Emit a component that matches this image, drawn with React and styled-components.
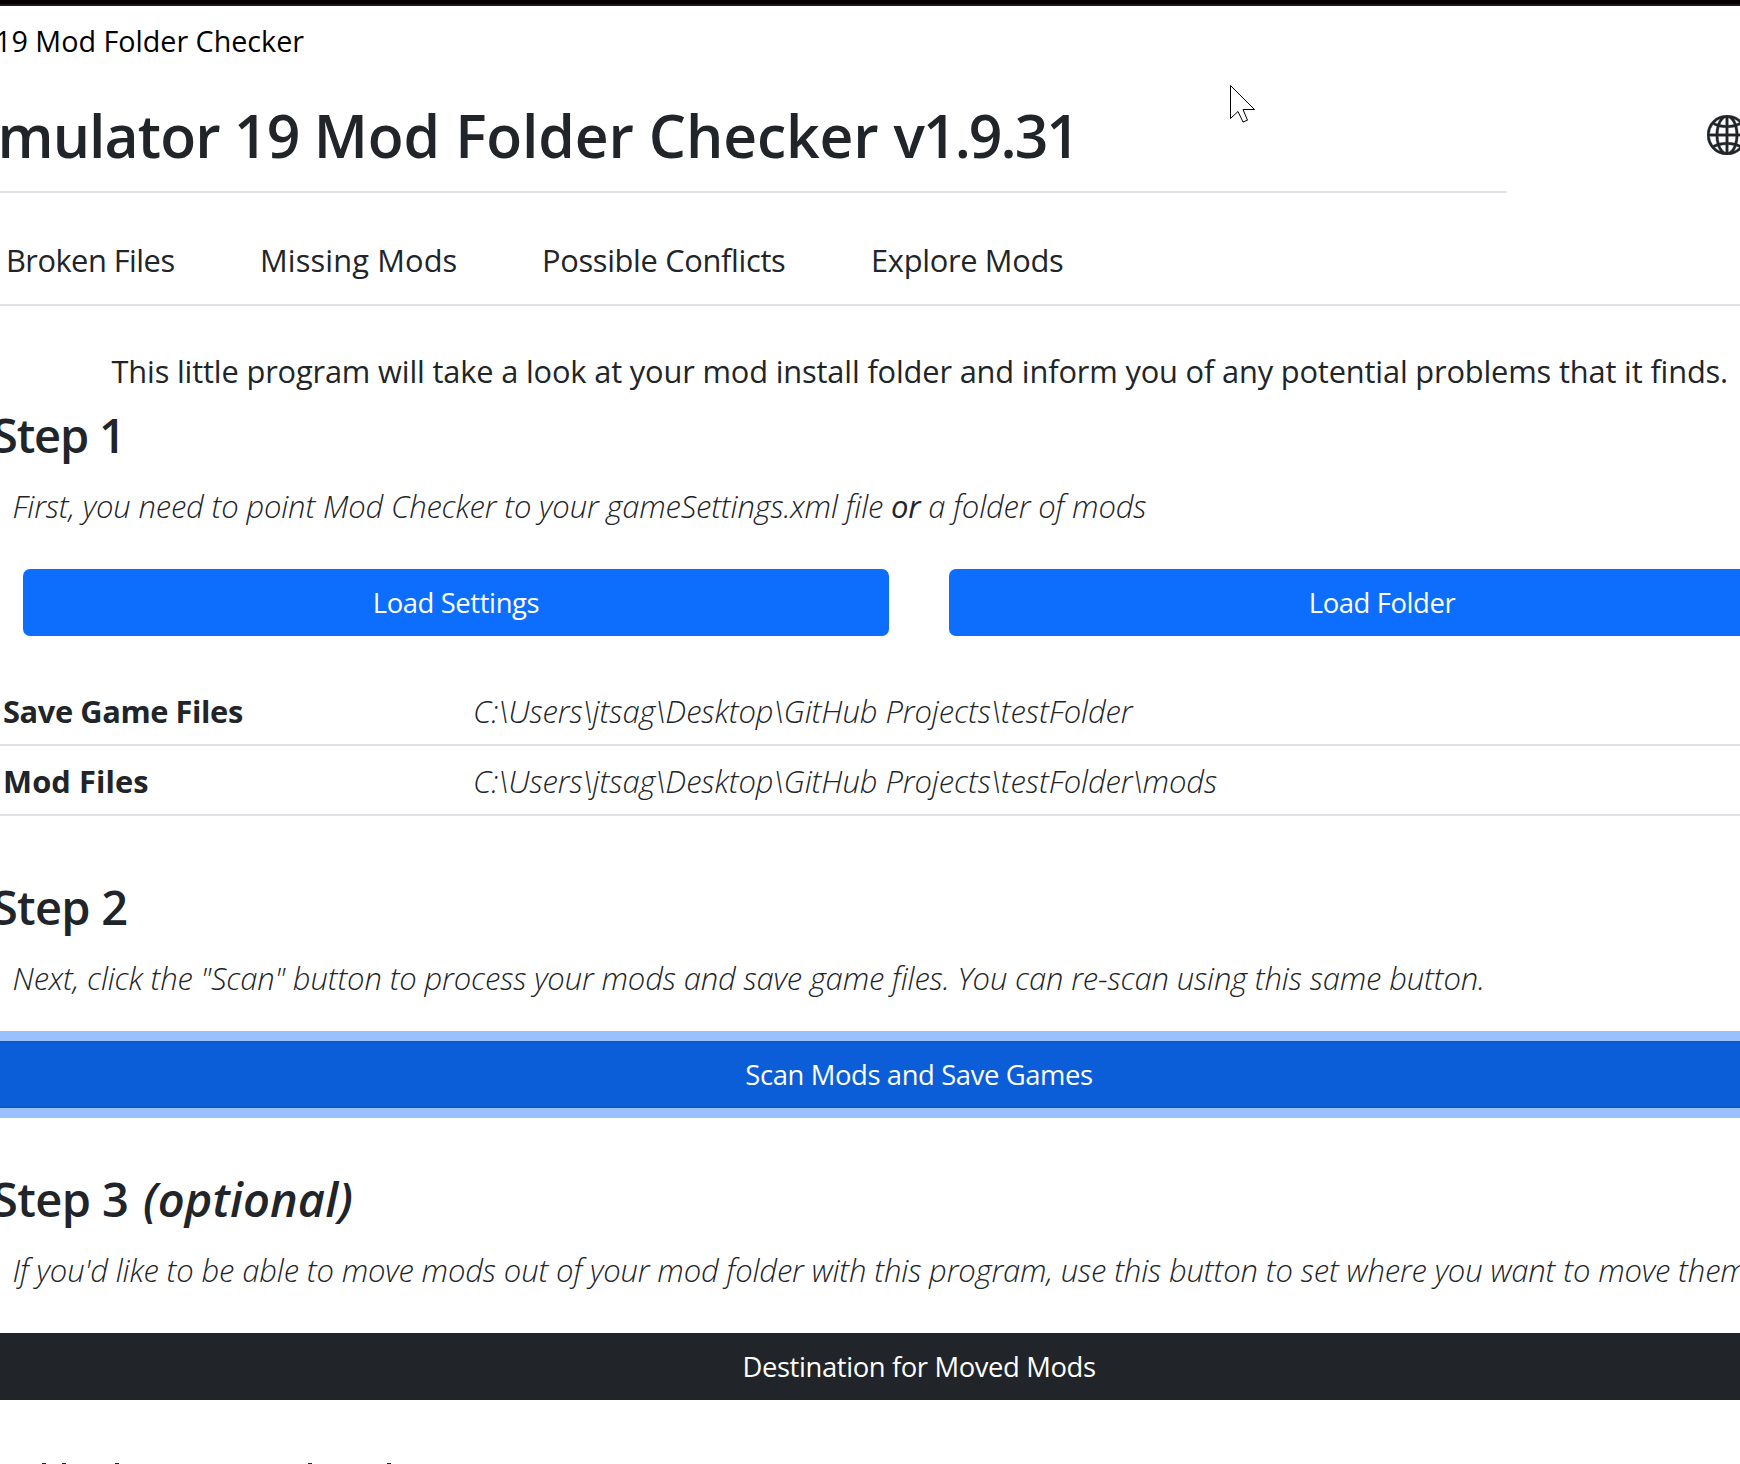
import React from "react";
import styled, { createGlobalStyle } from "styled-components";
import { BsGlobe2 } from "react-icons/bs";

const GlobalStyle = createGlobalStyle`
  * { box-sizing: border-box; }
  html, body { margin: 0; padding: 0; overflow: hidden; background: #fff; }
  body { font-family: "Open Sans", "Noto Sans", sans-serif; color: #212529; }
`;

const Window = styled.div`
  position: relative;
  display: flex;
  flex-direction: column;
  width: 1740px;
  height: 1464px;
  overflow: hidden;
  background: #fff;
  white-space: nowrap;
`;

const WindowEdge = styled.div`
  flex: none;
  height: 6px;
  background: #060001;
  border-bottom: 2px solid #1d1a1b;
`;

const TitleBar = styled.div`
  flex: none;
  height: 70px;
  display: flex;
  justify-content: flex-end;
  align-items: center;
  width: 304px;
  color: #000;
  font-size: 28.7px;
  line-height: 40px;
`;

const Header = styled.header`
  flex: none;
  display: flex;
  height: 117px;
`;

const HeaderTitle = styled.h1`
  flex: none;
  margin: 0;
  width: 1507px;
  height: 117px;
  padding: 23px 429px 0 0;
  display: flex;
  justify-content: flex-end;
  border-bottom: 2px solid #dee2e6;
  font-size: 58.8px;
  font-weight: 600;
  line-height: 72px;
  white-space: pre;
`;

const TitlePart = styled.span`
  letter-spacing: ${(p) => p.$tracking}px;
`;

const LanguageButton = styled.button`
  flex: none;
  margin: 39px 0 0 200px;
  padding: 0;
  width: 40px;
  height: 40px;
  border: 0;
  background: none;
  color: #212529;
  svg {
    display: block;
    width: 40px;
    height: 40px;
    stroke: currentColor;
    stroke-width: 0.15px;
  }
`;

const Tabs = styled.nav`
  flex: none;
  display: grid;
  grid-template-columns: 254px 282px 329px auto;
  height: 113px;
  padding: 43px 0 0 6px;
  border-bottom: 2px solid #dee2e6;
`;

const Tab = styled.a`
  font-size: 30.8px;
  line-height: 48px;
  letter-spacing: ${(p) => p.$tracking}px;
`;

const Intro = styled.p`
  flex: none;
  margin: 42px 0 0 111.5px;
  font-size: 30.8px;
  line-height: 46px;
  letter-spacing: -0.16px;
`;

const Step = styled.section`
  flex: none;
  display: flex;
  flex-direction: column;
  margin-top: ${(p) => p.$top}px;
`;

const StepTitle = styled.h2`
  margin: 1px 0 19px -8px;
  font-size: 47px;
  font-weight: 600;
  line-height: 58px;
  letter-spacing: ${(p) => p.$tracking}px;
`;

const Optional = styled.em`
  margin-left: 3px;
  letter-spacing: 0.1px;
`;

const Hint = styled.p`
  margin: 0 0 40px 12.5px;
  font-size: 31px;
  font-weight: 300;
  font-style: italic;
  line-height: 46px;
  letter-spacing: ${(p) => p.$tracking}px;
  b { font-weight: 500; }
`;

const ButtonRow = styled.div`
  display: grid;
  grid-template-columns: 866px 866px;
  column-gap: 60px;
  padding-left: 23px;
`;

const Button = styled.button`
  height: 67px;
  padding: 1px 0 0;
  border: 2px solid ${(p) => p.$border};
  border-radius: 7px;
  background: ${(p) => p.$fill};
  box-shadow: ${(p) => (p.$focused ? "0 0 0 10px #98c1fe" : "none")};
  color: #fff;
  font-family: inherit;
  font-size: 27.4px;
  line-height: 42px;
  letter-spacing: -0.38px;
`;

const WideButton = styled(Button)`
  width: 1880px;
  margin-left: -21px;
`;

const Paths = styled.dl`
  margin: 40px 0 0;
`;

const PathRow = styled.div`
  display: grid;
  grid-template-columns: 470px auto;
  align-items: center;
  height: 70px;
  padding: 1px 0 0 3px;
  border-bottom: 2px solid #dee2e6;
`;

const PathLabel = styled.dt`
  font-size: 30.8px;
  font-weight: 700;
  line-height: 46px;
  letter-spacing: ${(p) => p.$tracking}px;
`;

const PathValue = styled.dd`
  margin: 0;
  font-size: 31px;
  font-weight: 300;
  font-style: italic;
  line-height: 46px;
  letter-spacing: -0.08px;
`;

const NextHeading = styled.svg`
  flex: none;
  display: block;
  margin-top: 63px;
  width: 480px;
  height: 1px;
`;

const Pointer = styled.svg`
  position: absolute;
  left: 1230px;
  top: 85px;
  width: 26px;
  height: 40px;
`;

const tabs = [
  ["Broken Files", -0.52],
  ["Missing Mods", 0.12],
  ["Possible Conflicts", -0.32],
  ["Explore Mods", -0.3],
];

export default function App() {
  return (
    <Window>
      <GlobalStyle />
      <WindowEdge />
      <TitleBar>19 Mod Folder Checker</TitleBar>
      <Header>
        <HeaderTitle>
          <TitlePart $tracking={-0.9}>{"mulator 19 "}</TitlePart>
          <TitlePart $tracking={-0.15}>{"Mod Folder Checker "}</TitlePart>
          <TitlePart $tracking={-1.95}>v1.9.31</TitlePart>
        </HeaderTitle>
        <LanguageButton aria-label="Language">
          <BsGlobe2 />
        </LanguageButton>
      </Header>
      <Tabs>
        {tabs.map(([label, tracking]) => (
          <Tab key={label} $tracking={tracking}>{label}</Tab>
        ))}
      </Tabs>
      <Intro>
        This little program will take a look at your mod install folder and inform you of any potential problems that it finds.
      </Intro>

      <Step $top={11}>
        <StepTitle $tracking={-1.2}>Step 1</StepTitle>
        <Hint $tracking={-0.165}>
          First, you need to point Mod Checker to your gameSettings.xml file <b>or</b> a folder of mods
        </Hint>
        <ButtonRow>
          <Button $fill="#0d6efd" $border="#0d6efd">Load Settings</Button>
          <Button $fill="#0d6efd" $border="#0d6efd">Load Folder</Button>
        </ButtonRow>
        <Paths>
          <PathRow>
            <PathLabel $tracking={-0.4}>Save Game Files</PathLabel>
            <PathValue>{"C:\\Users\\jtsag\\Desktop\\GitHub Projects\\testFolder"}</PathValue>
          </PathRow>
          <PathRow>
            <PathLabel $tracking={0.1}>Mod Files</PathLabel>
            <PathValue>{"C:\\Users\\jtsag\\Desktop\\GitHub Projects\\testFolder\\mods"}</PathValue>
          </PathRow>
        </Paths>
      </Step>

      <Step $top={61}>
        <StepTitle $tracking={-0.75}>Step 2</StepTitle>
        <Hint $tracking={-0.155}>
          Next, click the "Scan" button to process your mods and save game files. You can re-scan using this same button.
        </Hint>
        <WideButton $fill="#0b5ed7" $border="#0a58ca" $focused>Scan Mods and Save Games</WideButton>
      </Step>

      <Step $top={61}>
        <StepTitle $tracking={-0.6}>Step 3 <Optional>(optional)</Optional></StepTitle>
        <Hint $tracking={-0.15}>
          If you'd like to be able to move mods out of your mod folder with this program, use this button to set where you want to move them
        </Hint>
        <WideButton $fill="#212529" $border="#212529">Destination for Moved Mods</WideButton>
      </Step>

      <NextHeading viewBox="0 0 480 1" fill="#212529">
        {[42, 62, 115, 308, 387].map((x) => (
          <rect key={x} x={x} y="0" width="4" height="1" />
        ))}
      </NextHeading>

      <Pointer viewBox="0 0 26 40" fill="#fff" stroke="#000" strokeWidth="1">
        <path d="M.5 .5V33.5L8 26.5L13 37L17.5 35.2L13 24.5H24.5Z" />
      </Pointer>
    </Window>
  );
}
